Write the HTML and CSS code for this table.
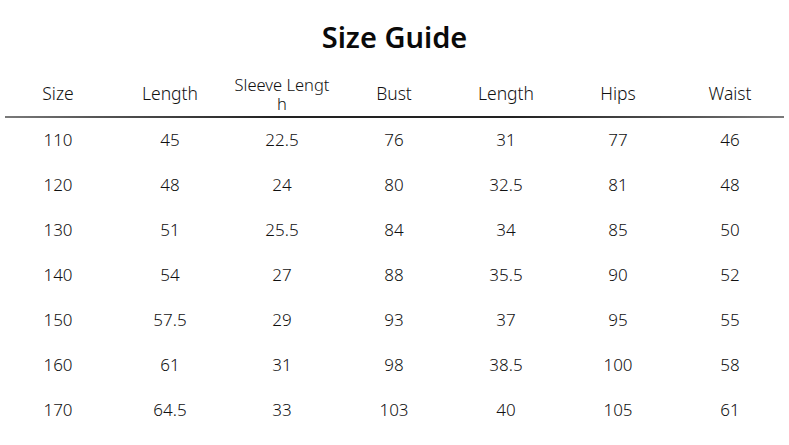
FILE: index.html
```html
<!DOCTYPE html>
<html lang="en">
<head>
<meta charset="utf-8">
<title>Size Guide</title>
<link rel="stylesheet" href="styles.css">
</head>
<body>
<main class="page">
  <h1 class="title">Size Guide</h1>
  <div class="table">
    <div class="row head">
      <div class="cell">Size</div>
      <div class="cell">Length</div>
      <div class="cell two">Sleeve Lengt<br>h</div>
      <div class="cell">Bust</div>
      <div class="cell">Length</div>
      <div class="cell">Hips</div>
      <div class="cell">Waist</div>
    </div>
    <div class="rule"></div>
    <div class="row"><div class="cell">110</div><div class="cell">45</div><div class="cell">22.5</div><div class="cell">76</div><div class="cell">31</div><div class="cell">77</div><div class="cell">46</div></div>
    <div class="row"><div class="cell">120</div><div class="cell">48</div><div class="cell">24</div><div class="cell">80</div><div class="cell">32.5</div><div class="cell">81</div><div class="cell">48</div></div>
    <div class="row"><div class="cell">130</div><div class="cell">51</div><div class="cell">25.5</div><div class="cell">84</div><div class="cell">34</div><div class="cell">85</div><div class="cell">50</div></div>
    <div class="row"><div class="cell">140</div><div class="cell">54</div><div class="cell">27</div><div class="cell">88</div><div class="cell">35.5</div><div class="cell">90</div><div class="cell">52</div></div>
    <div class="row"><div class="cell">150</div><div class="cell">57.5</div><div class="cell">29</div><div class="cell">93</div><div class="cell">37</div><div class="cell">95</div><div class="cell">55</div></div>
    <div class="row"><div class="cell">160</div><div class="cell">61</div><div class="cell">31</div><div class="cell">98</div><div class="cell">38.5</div><div class="cell">100</div><div class="cell">58</div></div>
    <div class="row"><div class="cell">170</div><div class="cell">64.5</div><div class="cell">33</div><div class="cell">103</div><div class="cell">40</div><div class="cell">105</div><div class="cell">61</div></div>
  </div>
</main>
</body>
</html>
```
FILE: styles.css
```css
html, body {
  margin: 0;
  padding: 0;
  background: #fff;
}
body {
  width: 789px;
  height: 445px;
  overflow: hidden;
  font-family: "Noto Sans", "Open Sans", "Liberation Sans", sans-serif;
  color: #111;
}
.page {
  display: flex;
  flex-direction: column;
}
.title {
  margin: 0;
  height: 72px;
  display: flex;
  align-items: center;
  justify-content: center;
  padding-top: 1px;
  box-sizing: border-box;
  font-size: 29px;
  font-weight: 600;
  color: #0a0a0a;
}
.table {
  display: flex;
  flex-direction: column;
  padding-left: 2px;
}
.row {
  display: grid;
  grid-template-columns: repeat(7, 112px);
  height: 45px;
  align-items: center;
}
.head {
  height: 44px;
}
.cell {
  text-align: center;
  font-size: 17px;
  font-weight: 350;
  line-height: 19px;
  padding-bottom: 3px;
}
.head .cell {
  font-size: 17.5px;
  padding-bottom: 2px;
}
.head .cell.two {
  font-size: 16.5px;
  line-height: 19px;
  padding-bottom: 0;
  padding-top: 0;
}
.rule {
  margin-left: 3px;
  width: 779px;
  height: 2px;
  background: linear-gradient(to right, #7a7a7a 0%, #555 12%, #222 35%, #222 65%, #555 88%, #7a7a7a 100%);
}
```
